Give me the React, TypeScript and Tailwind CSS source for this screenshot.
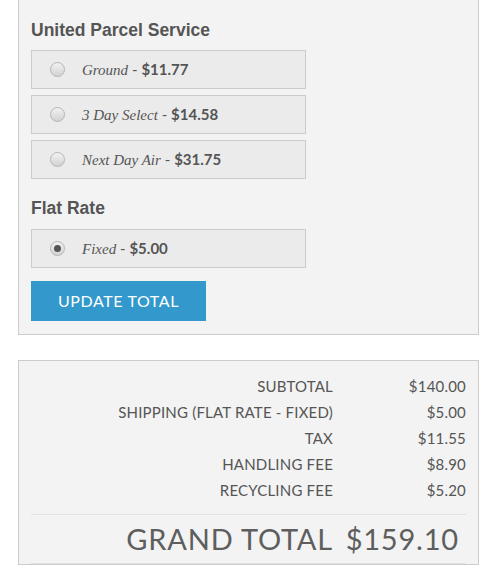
import React from 'react';

type Option = { name: string; price: string; checked?: boolean };

const ups: Option[] = [
  { name: 'Ground', price: '$11.77' },
  { name: '3 Day Select', price: '$14.58' },
  { name: 'Next Day Air', price: '$31.75' },
];

const flat: Option[] = [{ name: 'Fixed', price: '$5.00', checked: true }];

const totals = [
  ['SUBTOTAL', '$140.00'],
  ['SHIPPING (FLAT RATE - FIXED)', '$5.00'],
  ['TAX', '$11.55'],
  ['HANDLING FEE', '$8.90'],
  ['RECYCLING FEE', '$5.20'],
];

const Radio: React.FC<{ checked?: boolean }> = ({ checked }) => (
  <span className="flex h-[15px] w-[15px] shrink-0 items-center justify-center rounded-full border border-[#b5b5b5] bg-gradient-to-b from-[#f2f2f2] to-[#d2d2d2]">
    {checked && <span className="h-[7px] w-[7px] rounded-full bg-[#555]" />}
  </span>
);

const ShippingOption: React.FC<{ option: Option }> = ({ option }) => (
  <label className="flex h-[39px] w-[275px] items-center border border-[#cccccc] bg-[#ebebeb] pl-[18px]">
    <Radio checked={option.checked} />
    <span className="ml-[17px] text-[15px] text-[#555]">
      <span className="italic font-['Liberation_Serif',serif]">{option.name}</span>
      <span className="font-['Lato',sans-serif]"> - </span>
      <span className="font-bold font-['Lato',sans-serif]">{option.price}</span>
    </span>
  </label>
);

const App: React.FC = () => {
  return (
    <div className="min-h-[571px] bg-white pl-[18px] text-[#555]">
      {/* shipping methods */}
      <div className="w-[461px] border-x border-b border-[#cccccc] bg-[#f3f3f3] px-[12px] pt-[19px] pb-[13px]">
        <h3 className="mb-[9px] font-['Liberation_Sans',sans-serif] text-[17.5px] font-bold leading-[22px]">
          United Parcel Service
        </h3>
        <div className="flex flex-col gap-[6px]">
          {ups.map((o) => (
            <ShippingOption key={o.name} option={o} />
          ))}
        </div>
        <h3 className="mt-[18px] mb-[10px] font-['Liberation_Sans',sans-serif] text-[17.5px] font-bold leading-[22px]">
          Flat Rate
        </h3>
        {flat.map((o) => (
          <ShippingOption key={o.name} option={o} />
        ))}
        <button className="mt-[13px] h-[40px] w-[175px] bg-[#3399cc] font-['Lato',sans-serif] text-[16px] tracking-[0.6px] text-white">
          UPDATE TOTAL
        </button>
      </div>

      {/* totals */}
      <div className="mt-[25px] w-[461px] border border-[#cccccc] bg-[#f3f3f3] px-[12px] pt-[12px] font-['Lato',sans-serif]">
        <div className="pb-[11px]">
          {totals.map(([label, value]) => (
            <div key={label} className="flex text-[15px] leading-[26px] tracking-[0.2px]">
              <span className="flex-1 text-right">{label}</span>
              <span className="w-[133px] text-right">{value}</span>
            </div>
          ))}
        </div>
        <div className="flex h-[50px] items-center border-y border-[#e2e2e2] text-[29px] tracking-[0.8px] text-[#5e5e5e]">
          <span className="flex-1 text-right">GRAND TOTAL</span>
          <span className="w-[133px] pr-[7px] text-right">$159.10</span>
        </div>
      </div>
    </div>
  );
};

export default App;
